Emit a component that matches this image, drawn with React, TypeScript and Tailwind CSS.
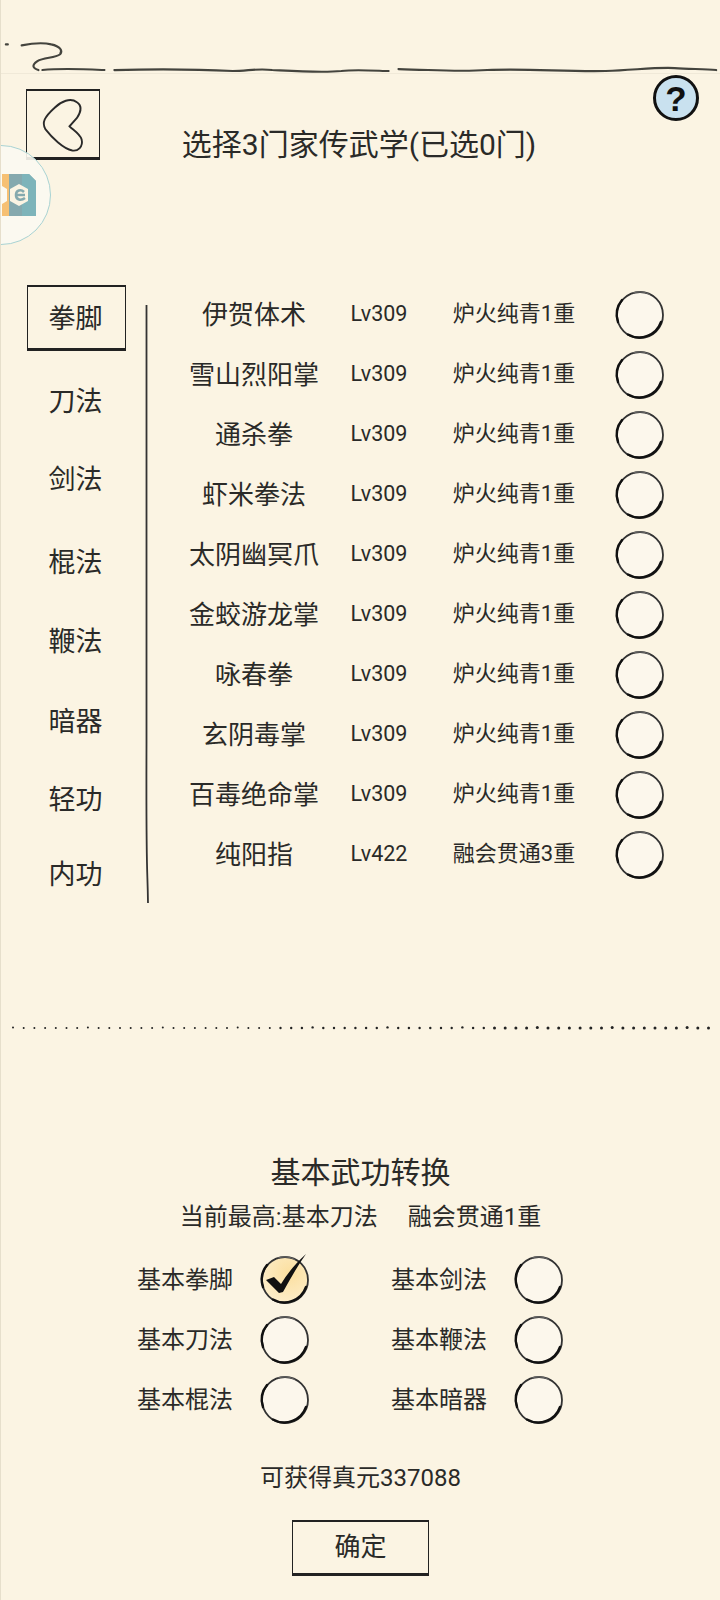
import React from "react";

const skills = [
  { name: "伊贺体术", lv: "Lv309", state: "炉火纯青1重" },
  { name: "雪山烈阳掌", lv: "Lv309", state: "炉火纯青1重" },
  { name: "通杀拳", lv: "Lv309", state: "炉火纯青1重" },
  { name: "虾米拳法", lv: "Lv309", state: "炉火纯青1重" },
  { name: "太阴幽冥爪", lv: "Lv309", state: "炉火纯青1重" },
  { name: "金蛟游龙掌", lv: "Lv309", state: "炉火纯青1重" },
  { name: "咏春拳", lv: "Lv309", state: "炉火纯青1重" },
  { name: "玄阴毒掌", lv: "Lv309", state: "炉火纯青1重" },
  { name: "百毒绝命掌", lv: "Lv309", state: "炉火纯青1重" },
  { name: "纯阳指", lv: "Lv422", state: "融会贯通3重" },
];

const Ring = ({ checked = false }: { checked?: boolean }) => (
  <svg viewBox="0 0 50 50" className="w-[50px] h-[50px] shrink-0 overflow-visible">
    <defs>
      <radialGradient id="gold" cx="60%" cy="35%" r="70%">
        <stop offset="0%" stopColor="#fbdf9f" />
        <stop offset="100%" stopColor="#fdeecb" />
      </radialGradient>
    </defs>
    <circle cx="25" cy="25" r="23" fill={checked ? "url(#gold)" : "#fcf7ec"} stroke="#333" strokeWidth="1.8" />
    <path d="M46 32a23 23 0 0 1-33 12.5" fill="none" stroke="#111" strokeWidth="2.4" strokeLinecap="round" />
    <path d="M3 32a23 23 0 0 1 4-22" fill="none" stroke="#111" strokeWidth="2.4" strokeLinecap="round" />
    <path d="M18 3a23 23 0 0 1 17 1.5" fill="none" stroke="#666" strokeWidth="1.2" />
    {checked && (
      <path d="M6 25l8-3 7 7C27 19 35 9 46-1 37 12 30 24 23 37l-4 1z" fill="#111" />
    )}
  </svg>
);

const Dots = () => (
  <svg viewBox="0 0 700 6" className="w-[700px] h-[6px] mx-[10px]">
    {Array.from({ length: 66 }).map((_, i) => (
      <circle key={i} cx={2 + i * 10.7} cy={i % 7 === 0 ? 2.4 : 3} r={i < 25 ? 1 : i < 45 ? 1.2 : 1.5} fill="#222" />
    ))}
  </svg>
);

export default function App() {
  return (
    <div
      className="relative w-[720px] h-[1600px] overflow-hidden bg-[#fbf4e3] text-[#2a2a28] border-l border-[#e6dfcc]"
      style={{ fontFamily: '"Roboto", "Noto Sans CJK SC", sans-serif' }}
    >
      {/* top ink line */}
      <div className="h-[74px] border-b border-[#f0e9d8]">
        <svg viewBox="0 0 720 74" className="w-[720px] h-[73px]">
          <g fill="none" stroke="#44443e" strokeLinecap="round">
            <path d="M0 45h2M16 46c10-2 22-3 30-1 9 2 12 6 9 10-5 4-17 3-23 7-6 4-5 7 1 9" strokeWidth="2.2" />
            <path d="M37 71c20-2 40-1 63 0" strokeWidth="2" />
            <path d="M110 71c40-1 80-1 120 1 15 0 25-3 40-1 20 1 50 3 70 1 15-2 40 0 48 0" strokeWidth="2.2" />
            <path d="M398 70c40 1 60 3 90 1 40-2 80 2 120 1 30-1 50-4 70-3 14 1 30 1 42 2" strokeWidth="2.2" />
          </g>
        </svg>
      </div>

      {/* header */}
      <div className="flex h-[211px]">
        <div className="w-[74px] ml-[25px] mt-[15px] h-[71px] border-x border-t-2 border-b-[3px] border-[#222] flex items-center justify-center shrink-0">
          <svg viewBox="0 0 74 71" className="w-[72px] h-[66px] shrink-0">
            <path
              d="M28 18c7-7 17-11 24-6 6 4 4 11 0 17l-8 9c4 4 11 8 13 14 2 8-4 13-10 12C37 62 25 50 18 41c-4-7-1-13 10-23z"
              fill="none"
              stroke="#2a2a2a"
              strokeWidth="2"
            />
          </svg>
        </div>
        <h1 className="w-[518px] shrink-0 pt-[52px] text-center text-[30px] leading-[38px] font-normal whitespace-nowrap">
          选择3门家传武学(已选0门)
        </h1>
        <div
          className="w-[46px] h-[46px] mt-[1px] ml-[35px] shrink-0 rounded-full bg-[#c9e1ef] border-[3px] border-[#111] flex items-center justify-center text-[35px] leading-none font-black text-[#111]"
          style={{ fontFamily: '"Liberation Sans", sans-serif' }}
        >
          ?
        </div>
      </div>

      {/* floating bubble */}
      <div className="absolute left-[-50px] top-[145px] w-[100px] h-[100px] rounded-full bg-[#fbf9f1]/90 border border-[#a9d3d3] overflow-hidden">
        <svg viewBox="0 0 40 44" className="absolute left-[50px] top-[27px] w-[40px] h-[44px]">
          <path d="M0 1h7v42H0z" fill="#f6c073" />
          <path d="M7 1h20l7 7v35H7z" fill="#85a9ae" />
          <path d="M20 1h7l7 7v35H20z" fill="#7db4ba" />
          <path d="M0 13l5 3v12l-5 3z" fill="#fbf9f1" />
          <path d="M8 16l9-5 9 5v12l-9 5-9-5z" fill="#fbf4e3" />
          <path d="M22 19c-3-3-8-2-8 3s5 6 9 3M15 22h8" fill="none" stroke="#85a9ae" strokeWidth="2.6" />
        </svg>
      </div>

      {/* skill selector */}
      <div className="flex h-[620px]">
        {/* tabs */}
        <div className="w-[144px] pl-[26px] shrink-0 text-[27px] leading-[36px]">
          <div className="w-[99px] h-[66px] pt-[3px] pr-[2px] border-x border-t-2 border-b-[3px] border-[#222] flex items-center justify-center">拳脚</div>
          <div className="w-[97px] text-center mt-[33px]">刀法</div>
          <div className="w-[97px] text-center mt-[42px]">剑法</div>
          <div className="w-[97px] text-center mt-[47px]">棍法</div>
          <div className="w-[97px] text-center mt-[43px]">鞭法</div>
          <div className="w-[97px] text-center mt-[44px]">暗器</div>
          <div className="w-[97px] text-center mt-[42px]">轻功</div>
          <div className="w-[97px] text-center mt-[39px]">内功</div>
        </div>
        {/* divider */}
        <svg viewBox="0 0 4 600" className="w-[4px] h-[598px] mt-[20px] shrink-0">
          <path d="M1.5 0c0 150 .5 300 0 440s1 120 1.5 160" fill="none" stroke="#333" strokeWidth="1.8" />
        </svg>
        {/* rows */}
        <div className="flex flex-col w-[540px] pl-[28px]">
          {skills.map((s) => (
            <div key={s.name} className="flex items-center h-[60px]">
              <div className="w-[154px] shrink-0 text-center text-[26px] whitespace-nowrap">{s.name}</div>
              <div className="w-[96px] shrink-0 pb-[1px] text-center text-[21.5px]">{s.lv}</div>
              <div className="w-[174px] shrink-0 pb-[3px] text-center text-[22px] whitespace-nowrap">{s.state}</div>
              <div className="ml-[14px]">
                <Ring />
              </div>
            </div>
          ))}
        </div>
      </div>

      <div className="pt-[120px] h-[228px]">
        <Dots />
      </div>

      {/* basic skill conversion */}
      <div className="flex flex-col items-center pt-[20px]">
        <div className="text-[30px] leading-[40px]">基本武功转换</div>
        <div className="flex gap-[30px] mt-[6px] text-[24px] leading-[36px] whitespace-nowrap">
          <span>当前最高:基本刀法</span>
          <span>融会贯通1重</span>
        </div>
        <div className="grid grid-cols-2 gap-x-[81px] mt-[15px] pr-[20px] text-[24px]">
          {["基本拳脚", "基本剑法", "基本刀法", "基本鞭法", "基本棍法", "基本暗器"].map((t, i) => (
            <div key={t} className="flex items-center h-[60px] gap-[27px]">
              <span className="whitespace-nowrap">{t}</span>
              <Ring checked={i === 0} />
            </div>
          ))}
        </div>
        <div className="mt-[32px] text-[24px] leading-[32px]">可获得真元337088</div>
        <div className="mt-[26px] w-[137px] h-[56px] border-x border-t-2 border-b-[3px] border-[#222] flex items-center justify-center text-[26px]">确定</div>
      </div>
    </div>
  );
}
